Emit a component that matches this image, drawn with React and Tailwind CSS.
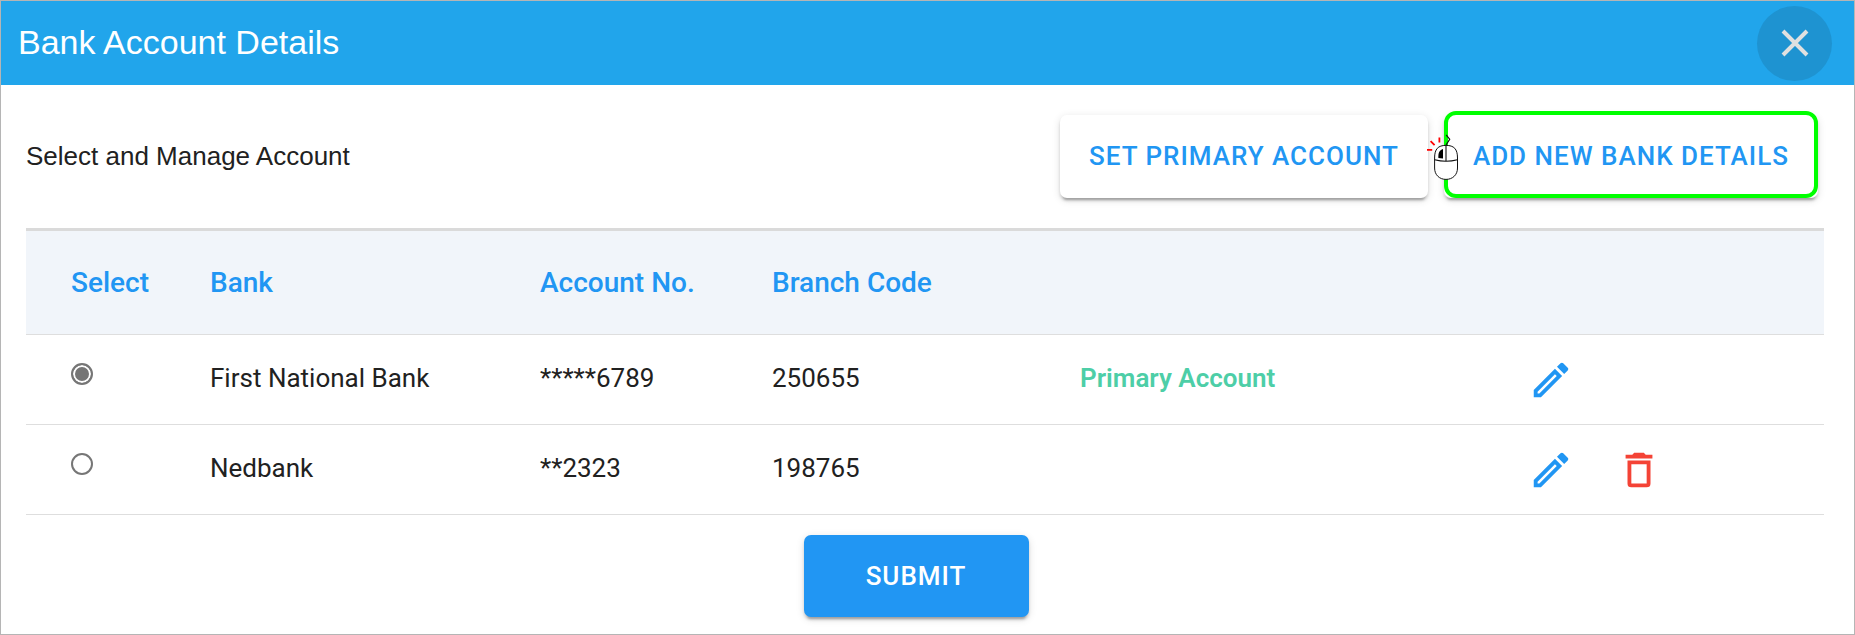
import { useState } from "react";

const ACCOUNTS = [
  { id: "fnb", bank: "First National Bank", number: "*****6789", branch: "250655", primary: true },
  { id: "nedbank", bank: "Nedbank", number: "**2323", branch: "198765", primary: false },
];

const RAISED =
  "shadow-[0_5px_2px_-3px_rgba(0,0,0,0.2),0_3px_3px_0_rgba(0,0,0,0.14),0_2px_8px_0_rgba(0,0,0,0.12)]";

function PencilIcon() {
  return (
    <svg viewBox="0 0 24 24" className="block size-[46px]" fill="currentColor" aria-hidden="true">
      <path d="M14.06,9L15,9.94L5.92,19H5V18.08L14.06,9M17.66,3C17.41,3 17.15,3.1 16.96,3.29L15.13,5.12L18.88,8.87L20.71,7.04C21.1,6.65 21.1,6 20.71,5.63L18.37,3.29C18.17,3.09 17.92,3 17.66,3M14.06,6.19L3,17.25V21H6.75L17.81,9.94L14.06,6.19Z" />
    </svg>
  );
}

function TrashIcon() {
  return (
    <svg viewBox="0 0 24 24" className="block size-[46px]" fill="currentColor" aria-hidden="true">
      <path d="M6,19A2,2 0 0,0 8,21H16A2,2 0 0,0 18,19V7H6V19M8,9H16V19H8V9M15.5,4L14.5,3H9.5L8.5,4H5V6H19V4H15.5Z" />
    </svg>
  );
}

function MouseClickIcon() {
  return (
    <svg
      viewBox="0 0 50 70"
      className="pointer-events-none absolute top-[5px] -left-[23px] h-[70px] w-[50px]"
      fill="none"
      aria-hidden="true"
    >
      <path d="M25 25 L28.7 19.2 L25.2 15" stroke="#111" strokeWidth="1.2" />
      <path
        d="M13.6 38 C13.6 29 17 25.4 25 25.4 C33 25.4 36.5 29 36.5 38 V48 C36.5 55 31.5 59.4 25 59.4 C18.5 59.4 13.6 55 13.6 48 Z"
        fill="#fff"
        stroke="#111"
        strokeWidth="1"
      />
      <path d="M13.6 39.8 Q25 42.8 36.5 39.8 M25 25.4 V41.3" stroke="#111" strokeWidth="1.1" />
      <path d="M22 29 V38.6 L17.4 38 C17 33 18.4 30 22 29 Z" fill="#000" />
      <path d="M6 29.8 H11.2 M9.6 21.2 L13.6 25.2 M18.4 17.6 V22.6" stroke="#f00" strokeWidth="1.8" />
    </svg>
  );
}

export default function App() {
  const [selected, setSelected] = useState("fnb");

  return (
    <div className="border border-[#b5b5b5] bg-white font-[Roboto,sans-serif] text-[26px] leading-8 text-[#212121]">
      <header className="flex h-[84px] items-center justify-between bg-[#21a5eb] pr-[22px] pl-[17px]">
        <h1 className="pb-0.5 font-['Liberation_Sans',Arial,sans-serif] text-[34px] leading-10 text-white">
          Bank Account Details
        </h1>
        <button
          type="button"
          aria-label="Close"
          className="flex size-[75px] items-center justify-center rounded-full bg-[#1e93d1]"
        >
          <svg viewBox="0 0 28 28" className="size-7" stroke="#e0e0e0" strokeWidth="4" aria-hidden="true">
            <path d="M2 2 L26 26 M26 2 L2 26" />
          </svg>
        </button>
      </header>

      <main className="pr-[30px] pb-[17px] pl-[25px]">
        <div className="flex items-center justify-between py-[30px] pr-1.5">
          <p className="pb-0.5 font-['Liberation_Sans',Arial,sans-serif]">Select and Manage Account</p>
          <div className="flex gap-4">
            <button
              type="button"
              className={`h-[83px] rounded-[7px] bg-white px-[29px] pb-0.5 font-medium tracking-[1px] text-[#2196f3] ${RAISED}`}
            >
              SET PRIMARY ACCOUNT
            </button>
            <div className="relative">
              <button
                type="button"
                className={`h-[83px] rounded-[7px] bg-white px-[29px] pb-0.5 font-medium tracking-[1px] text-[#2196f3] ${RAISED}`}
              >
                ADD NEW BANK DETAILS
              </button>
              <span className="pointer-events-none absolute inset-x-0 -top-1 bottom-0 rounded-xl border-4 border-[#00ff00]" />
              <MouseClickIcon />
            </div>
          </div>
        </div>

        <table className="w-full table-fixed border-separate border-spacing-0 text-left">
          <colgroup>
            <col className="w-[184px]" />
            <col className="w-[330px]" />
            <col className="w-[232px]" />
            <col className="w-[308px]" />
            <col className="w-[448px]" />
            <col className="w-[88px]" />
            <col className="w-[208px]" />
          </colgroup>
          <thead className="bg-[#f1f5fa] text-[28px] text-[#2196f3] [&_th]:h-[107px] [&_th]:border-t-3 [&_th]:border-b [&_th]:border-t-[#dadada] [&_th]:border-b-[#dedede] [&_th]:p-0 [&_th]:font-medium">
            <tr>
              <th scope="col">
                <div className="pl-[45px]">Select</div>
              </th>
              <th scope="col">Bank</th>
              <th scope="col">Account No.</th>
              <th scope="col">Branch Code</th>
              <th />
              <th />
              <th />
            </tr>
          </thead>
          <tbody className="[&_td]:h-[90px] [&_td]:border-b [&_td]:border-[#dedede] [&_td]:p-0">
            {ACCOUNTS.map((a) => (
              <tr key={a.id}>
                <td>
                  <div className="flex pb-3 pl-[45px]">
                    <input
                      type="radio"
                      name="account"
                      aria-label={a.bank}
                      checked={selected === a.id}
                      onChange={() => setSelected(a.id)}
                      className="size-[22px] appearance-none rounded-full border-2 border-[#767676] bg-white checked:bg-[#767676] checked:shadow-[inset_0_0_0_2px_#fff]"
                    />
                  </div>
                </td>
                <td>
                  <div className="pb-1">{a.bank}</div>
                </td>
                <td>
                  <div className="pb-1">{a.number}</div>
                </td>
                <td>
                  <div className="pb-1">{a.branch}</div>
                </td>
                <td>
                  {a.primary && <div className="pb-1 font-semibold text-[#4dcea7]">Primary Account</div>}
                </td>
                <td>
                  <button type="button" aria-label={`Edit ${a.bank}`} className="block text-[#2196f3]">
                    <PencilIcon />
                  </button>
                </td>
                <td>
                  {!a.primary && (
                    <button type="button" aria-label={`Delete ${a.bank}`} className="block text-[#f44336]">
                      <TrashIcon />
                    </button>
                  )}
                </td>
              </tr>
            ))}
          </tbody>
        </table>

        <div className="flex justify-center pt-5 pr-[18px]">
          <button
            type="submit"
            className={`h-[82px] w-[225px] rounded-[7px] bg-[#2196f3] font-medium tracking-[1px] text-white ${RAISED}`}
          >
            SUBMIT
          </button>
        </div>
      </main>
    </div>
  );
}
